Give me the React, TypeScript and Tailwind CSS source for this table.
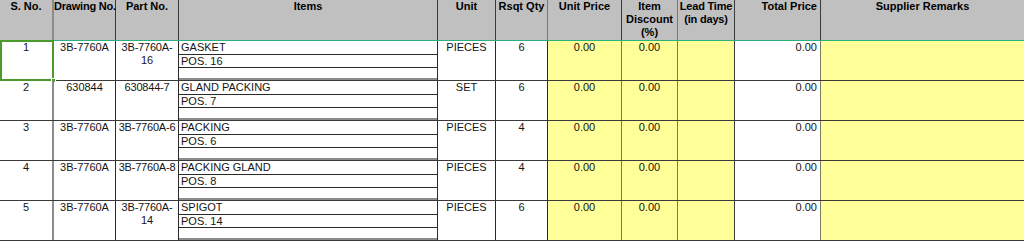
import React from "react";

type Row = { sno: string; drawing: string; part: string[]; item: string; pos: string; unit: string; qty: string };

const ROWS: Row[] = [
  { sno: "1", drawing: "3B-7760A", part: ["3B-7760A-", "16"], item: "GASKET", pos: "POS. 16", unit: "PIECES", qty: "6" },
  { sno: "2", drawing: "630844", part: ["630844-7"], item: "GLAND PACKING", pos: "POS. 7", unit: "SET", qty: "6" },
  { sno: "3", drawing: "3B-7760A", part: ["3B-7760A-6"], item: "PACKING", pos: "POS. 6", unit: "PIECES", qty: "4" },
  { sno: "4", drawing: "3B-7760A", part: ["3B-7760A-8"], item: "PACKING GLAND", pos: "POS. 8", unit: "PIECES", qty: "4" },
  { sno: "5", drawing: "3B-7760A", part: ["3B-7760A-", "14"], item: "SPIGOT", pos: "POS. 14", unit: "PIECES", qty: "6" },
];

const COLS = "grid grid-cols-[54px_62px_63px_259px_58px_52px_74px_56px_57px_86px_203px] whitespace-nowrap";

// feuille de cotation façon Excel — en-tête gris, colonnes fournisseur en jaune
export default function App() {
  return (
    <div className="h-[241px] w-[1024px] overflow-hidden bg-white font-['Liberation_Sans',Arial,sans-serif] text-[11px] leading-[13px] text-[#151515]">
      <div className={`${COLS} h-[41px] border-b border-[#2bb27c] bg-[#c0c0c0] font-bold text-black`}>
        <div className="border-r-2 border-[#8c8c8c] text-center">S. No.</div>
        <div className="overflow-visible border-r border-[#3a3a3a] text-center tracking-[-0.2px]">Drawing No.</div>
        <div className="border-r border-[#3a3a3a] text-center">Part No.</div>
        <div className="border-r border-[#3a3a3a] text-center">Items</div>
        <div className="border-r border-[#3a3a3a] text-center">Unit</div>
        <div className="border-r border-[#777] text-center">Rsqt Qty</div>
        <div className="border-r border-[#3a3a3a] text-center">Unit Price</div>
        <div className="border-r border-[#777] text-center">Item<br />Discount<br />(%)</div>
        <div className="border-r border-[#3a3a3a] text-center tracking-[-0.2px]">Lead Time<br />(in days)</div>
        <div className="border-r border-[#3a3a3a] pr-[3px] text-right">Total Price</div>
        <div className="text-center">Supplier Remarks</div>
      </div>

      {ROWS.map((r, i) => (
        <div key={r.sno} className={`${COLS} h-[40px] border-b border-[#3a3a3a]`}>
          <div className="relative border-r-2 border-[#8c8c8c] text-center">
            {r.sno}
            {i === 0 && (
              <>
                <div className="absolute left-0 top-[-1px] h-[41px] w-[54px] border-2 border-[#4a9a2c]" />
                <div className="absolute left-[51px] top-[37px] h-[5px] w-[5px] border border-white bg-[#4a9a2c]" />
              </>
            )}
          </div>
          <div className="border-r border-[#2a2a2a] text-center">{r.drawing}</div>
          <div className="border-r border-[#2a2a2a] text-center tracking-[-0.2px]">
            {r.part.map((p) => (
              <div key={p}>{p}</div>
            ))}
          </div>
          <div className="flex flex-col border-r border-[#2a2a2a]">
            <div className="h-[14px] border-b border-[#2a2a2a] pl-[2px]">{r.item}</div>
            <div className="h-[13px] border-b border-[#2a2a2a] pl-[2px]">{r.pos}</div>
            <div className="flex-1 border-b-2 border-[#8c8c8c]" />
          </div>
          <div className="border-r border-[#2a2a2a] text-center">{r.unit}</div>
          <div className="border-r border-[#2a2a2a] text-center">{r.qty}</div>
          <div className="border-r border-[#7a7a60] bg-[#ffff99] text-center">0.00</div>
          <div className="border-r border-[#7a7a60] bg-[#ffff99] text-center">0.00</div>
          <div className="border-r border-[#3a3a3a] bg-[#ffff99]" />
          <div className="border-r border-[#7a7a60] pr-[3px] text-right">0.00</div>
          <div className="bg-[#ffff99]" />
        </div>
      ))}
    </div>
  );
}
